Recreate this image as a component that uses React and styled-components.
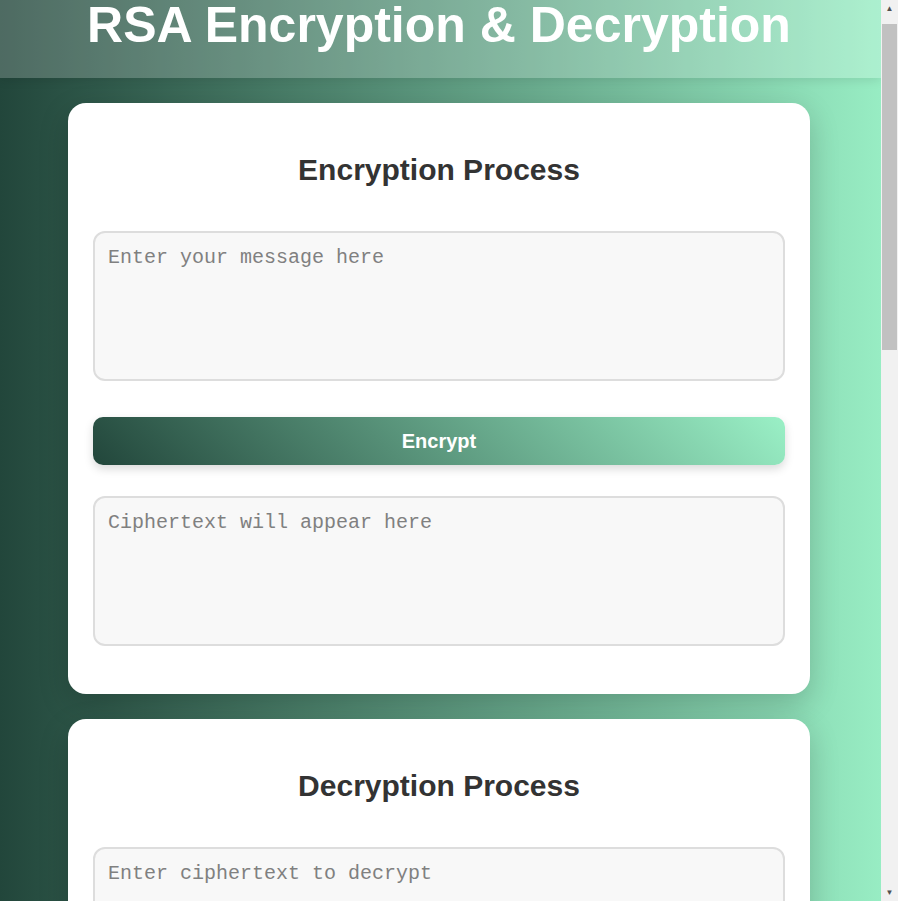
import React, { useState } from 'react'
import styled, { createGlobalStyle } from 'styled-components'

const GlobalStyle = createGlobalStyle`
  * { box-sizing: border-box; }
  body {
    margin: 0 17px 0 0;
    min-height: 100vh;
    font-family: 'Liberation Sans', Arial, sans-serif;
    background: linear-gradient(to right, #22463b, #9af0c6) #9af0c6;
  }
`

const ScrollTrack = styled.div`
  position: fixed;
  top: 0;
  right: 0;
  bottom: 0;
  width: 17px;
  display: flex;
  flex-direction: column;
  align-items: center;
  background: #f1f1f1;
`

const ScrollArrow = styled.span`
  height: 17px;
  display: flex;
  align-items: center;
  justify-content: center;
  font-size: 8px;
  color: #505050;
`

const ScrollThumb = styled.div`
  width: 15px;
  height: 326px;
  margin-top: 7px;
  background: #c1c1c1;
`

const Spacer = styled.div`
  flex: 1;
`

const Header = styled.header`
  height: 78px;
  padding: 0 3px 28px 0;
  background: rgba(255, 255, 255, 0.2);
  box-shadow: 0 2px 10px rgba(0, 0, 0, 0.1);
  text-align: center;
`

const Title = styled.h1`
  margin: 0;
  font-size: 50px;
  line-height: 50px;
  font-weight: 700;
  color: #fff;
`

const Main = styled.main`
  display: flex;
  flex-direction: column;
  align-items: center;
  gap: 25px;
  padding: 25px 3px 40px 0;
`

const Card = styled.section`
  width: 742px;
  display: flex;
  flex-direction: column;
  padding: 25px 25px 48px;
  background: #fff;
  border-radius: 18px;
  box-shadow: 0 10px 30px rgba(0, 0, 0, 0.18);
`

const CardTitle = styled.h2`
  margin: 25px 0 44px;
  font-size: 30px;
  line-height: 34px;
  font-weight: 700;
  color: #333;
  text-align: center;
`

const Field = styled.textarea`
  display: block;
  width: 100%;
  height: 150px;
  padding: 13px;
  border: 2px solid #ddd;
  border-radius: 12px;
  background: #f8f8f8;
  font-family: 'Liberation Mono', 'Courier New', monospace;
  font-size: 20px;
  color: #333;
  resize: none;
  outline: none;
  margin-bottom: ${({ $gap }) => $gap || 0}px;
  &::placeholder { color: #808080; }
`

const ActionButton = styled.button`
  display: block;
  width: 100%;
  height: 48px;
  margin-bottom: 31px;
  border: none;
  border-radius: 10px;
  background: linear-gradient(45deg, #22463b, #9af0c6);
  box-shadow: 0 4px 10px rgba(0, 0, 0, 0.15);
  font-family: 'Liberation Sans', Arial, sans-serif;
  font-size: 20px;
  font-weight: 700;
  color: #fff;
  cursor: pointer;
`

const Process = ({ title, inputHint, outputHint, action }) => {
  const [input, setInput] = useState('')
  const [output] = useState('')

  return (
    <Card>
      <CardTitle>{title}</CardTitle>
      <Field
        $gap={36}
        placeholder={inputHint}
        value={input}
        onChange={e => setInput(e.target.value)}
      />
      <ActionButton type="button">{action}</ActionButton>
      <Field placeholder={outputHint} value={output} readOnly />
    </Card>
  )
}

const App = () => (
  <>
    <GlobalStyle />
    <Header>
      <Title>RSA Encryption &amp; Decryption</Title>
    </Header>
    <Main>
      <Process
        title="Encryption Process"
        inputHint="Enter your message here"
        outputHint="Ciphertext will appear here"
        action="Encrypt"
      />
      <Process
        title="Decryption Process"
        inputHint="Enter ciphertext to decrypt"
        outputHint="Decrypted message will appear here"
        action="Decrypt"
      />
    </Main>
    <ScrollTrack aria-hidden="true">
      <ScrollArrow>▲</ScrollArrow>
      <ScrollThumb />
      <Spacer />
      <ScrollArrow>▼</ScrollArrow>
    </ScrollTrack>
  </>
)

export default App
